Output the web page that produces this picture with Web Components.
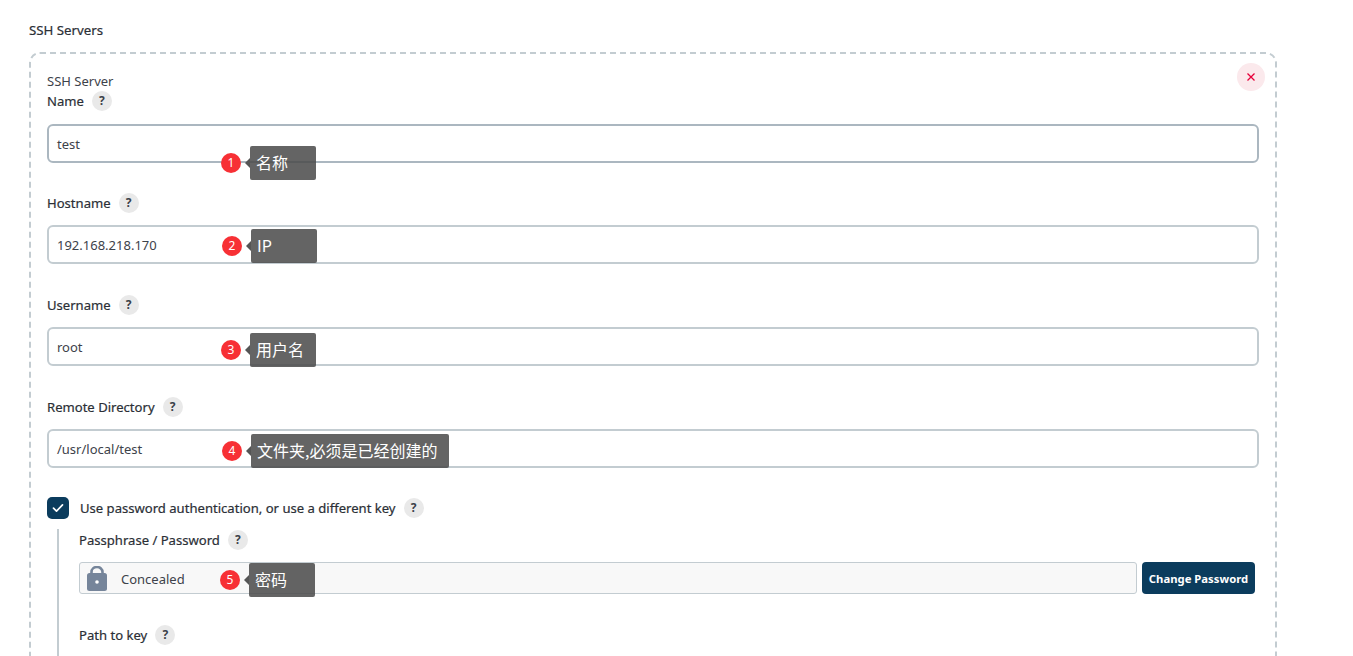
<!DOCTYPE html>
<html lang="zh"><head><meta charset="utf-8"><title>SSH Servers</title>
<style>
html,body{margin:0;padding:0;background:#fff;height:656px;overflow:hidden}
body{font:13px/22px "Noto Sans","Noto Sans CJK SC",sans-serif;color:#333840}
</style></head><body>
<ssh-page>
  <span slot="title">SSH Servers</span>
  <repeat-card heading="SSH Server">
    <form-field label="Name" value="test" num="1" note="名称" nx="174" ny="22" strong></form-field>
    <form-field label="Hostname" value="192.168.218.170" num="2" note="IP" nx="175" ny="4"></form-field>
    <form-field label="Username" value="root" num="3" note="用户名" nx="174" ny="6"></form-field>
    <form-field label="Remote Directory" value="/usr/local/test" num="4" note="文件夹,必须是已经创建的" nx="175" ny="5"></form-field>
    <check-row>Use password authentication, or use a different key</check-row>
    <nested-block>
      <help-label>Passphrase / Password</help-label>
      <password-row></password-row>
      <help-label style="margin-top:30px">Path to key</help-label>
    </nested-block>
  </repeat-card>
</ssh-page>
<script>
function def(name, css, html){
  customElements.define(name, class extends HTMLElement{
    connectedCallback(){
      if(this.shadowRoot) return;
      const r=this.attachShadow({mode:'open'});
      r.innerHTML='<style>'+css+'</style>'+(typeof html==='function'?html(this):html);
    }
  });
}
const esc=s=>String(s||'').replace(/&/g,'&amp;').replace(/</g,'&lt;').replace(/"/g,'&quot;');
def('ssh-page',
 ':host{display:block;padding:19px 76px 0 29px}.t{font-weight:400;line-height:22px;color:#2b2f36;font-size:13.25px;-webkit-text-stroke:.2px #2b2f36;margin-bottom:12px}',
 '<div class="t"><slot name="title"></slot></div><slot></slot>');
def('help-badge',
 ':host{display:inline-flex;width:20px;height:20px;border-radius:50%;background:#e9e9e9;color:#3b4048;align-items:center;justify-content:center;font:700 12px/20px "Noto Sans",sans-serif;flex:none}',
 '?');
def('help-label',
 ':host{display:flex;align-items:center;gap:8px;height:22px;font-weight:400;font-size:13.08px;color:#2b2f36;-webkit-text-stroke:.2px #2b2f36}',
 '<span><slot></slot></span><help-badge style="-webkit-text-stroke:0"></help-badge>');
def('repeat-card',
 `:host{display:block;position:relative;box-sizing:border-box;height:640px;margin-top:-1px;padding:19px 18px 0 18px}
  svg.b{position:absolute;inset:0;width:100%;height:100%;pointer-events:none}
  .h{line-height:20px;height:19px;color:#3d424a}
  .x{position:absolute;top:11px;right:12px;width:28px;height:28px;border-radius:50%;background:#fbe9ec;display:flex;align-items:center;justify-content:center}`,
 el=>`<svg class="b" width="1248" height="640"><rect x="1" y="1" width="1246" height="638" rx="10" fill="none" stroke="#c3ccd1" stroke-width="2" stroke-dasharray="6 4"/></svg>
 <div class="h">${esc(el.getAttribute('heading'))}</div>
 <div class="x"><svg width="10" height="10" viewBox="0 0 10 10"><path d="M1.5 1.5l7 7M8.5 1.5l-7 7" stroke="#e6003a" stroke-width="1.3" fill="none"/></svg></div>
 <slot></slot>`);
def('note-pin',
 `:host{position:absolute;display:flex;align-items:center;z-index:2}
  .n{width:20px;height:20px;border-radius:50%;background:#f73035;color:#fff;font:12px/20px "Noto Sans",sans-serif;text-align:center;flex:none}
  .a{width:0;height:0;border:5px solid transparent;border-right-color:#555;border-left:0;margin-left:4px;flex:none}
  .t{background:rgba(75,75,75,.86);color:#fff;border-radius:2px;height:34px;padding:0 12px 0 6px;font:16px/33px "Noto Sans CJK SC","Noto Sans",sans-serif;white-space:nowrap;min-width:48px}`,
 el=>`<span class="n">${esc(el.getAttribute('num'))}</span><span class="a"></span><span class="t">${esc(el.getAttribute('text'))}</span>`);
def('form-field',
 `:host{display:block;margin-bottom:30px}
  :host([strong]){margin-bottom:29px}
  .box{position:relative;box-sizing:border-box;height:39px;margin-top:11px;border:2px solid #c3ccd1;border-radius:6px;padding:0 8px;line-height:37px;color:#3d424a;background:#fff}
  :host([strong]) .box{border-color:#abb7c0;margin-top:12px}`,
 el=>`<help-label>${esc(el.getAttribute('label'))}</help-label>
  <div class="box">${esc(el.getAttribute('value'))}
  <note-pin num="${esc(el.getAttribute('num'))}" text="${esc(el.getAttribute('note'))}" style="left:${el.getAttribute('nx')-2}px;top:${el.getAttribute('ny')-2}px"></note-pin></div>`);
def('check-row',
 `:host{display:flex;align-items:center;gap:11px;height:22px;font-weight:400;font-size:13.08px;color:#2b2f36;margin-top:-1px}
  .c{width:22px;height:22px;border-radius:5px;background:#0b3c5d;display:flex;align-items:center;justify-content:center;flex:none}
  .r{display:flex;align-items:center;gap:8px}
  .l{-webkit-text-stroke:.2px #2b2f36}`,
 `<span class="c"><svg width="12" height="10" viewBox="0 0 12 10"><path d="M1.5 5.2l3 3 6-6.4" stroke="#fff" stroke-width="1.7" fill="none" stroke-linecap="round" stroke-linejoin="round"/></svg></span><span class="r"><span class="l"><slot></slot></span><help-badge></help-badge></span>`);
def('nested-block',
 `:host{display:block;margin:10px 0 0 10px;border-left:2px solid #c3ccd1;padding-left:20px;height:140px}`,
 '<slot></slot>');
def('password-row',
 `:host{display:flex;gap:5px;margin-top:11px;height:32px;position:relative;margin-right:4px;-webkit-text-stroke:0}
  .f{flex:1;box-sizing:border-box;border:1px solid #c3ccd1;border-radius:3px;background:#f8f8f8;display:flex;align-items:center;padding-left:7px;gap:14px;position:relative;color:#3d424a}
  .v{padding-top:1px}
  button{all:unset;box-sizing:border-box;width:113px;background:#0b3c5d;color:#fff;border-radius:4px;text-align:center;font:700 11.3px/34px "Noto Sans",sans-serif}`,
 `<div class="f"><svg width="20" height="25" viewBox="0 0 20 25"><path d="M4.5 9V6a5.5 5 0 0 1 11 0V9" fill="none" stroke="#76859a" stroke-width="2.6"/><rect y="7" width="20" height="18" rx="2.5" fill="#76859a"/><circle cx="10" cy="16" r="1.8" fill="#fff"/></svg><span class="v">Concealed</span>
 <note-pin num="5" text="密码" style="left:140px;top:0"></note-pin></div><button>Change Password</button>`);
</script>
</body></html>
